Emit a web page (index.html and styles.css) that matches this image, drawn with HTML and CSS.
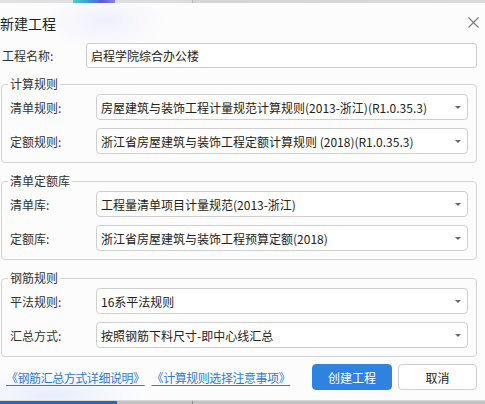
FILE: index.html
```html
<!DOCTYPE html>
<html lang="zh">
<head>
<meta charset="utf-8">
<title>新建工程</title>
<link rel="stylesheet" href="styles.css">
</head>
<body>
<div class="screen">
  <div class="topbar"><span class="blob"></span><span class="tick"></span></div>
  <div class="dialog">
    <div class="titlebar">
      <span class="title">新建工程</span>
      <svg class="close" width="11" height="11" viewBox="0 0 11 11"><path d="M0.5 0.5 L10.5 10.5 M10.5 0.5 L0.5 10.5" stroke="#7a7a7a" stroke-width="1.1" fill="none"/></svg>
    </div>
    <div class="name-row">
      <span class="name-label">工程名称:</span>
      <div class="input">启程学院综合办公楼</div>
    </div>

    <fieldset class="group">
      <legend>计算规则</legend>
      <div class="row"><span class="label">清单规则:</span><div class="select"><span>房屋建筑与装饰工程计量规范计算规则(2013-浙江)(R1.0.35.3)</span><i class="caret"></i></div></div>
      <div class="row"><span class="label">定额规则:</span><div class="select"><span>浙江省房屋建筑与装饰工程定额计算规则 (2018)(R1.0.35.3)</span><i class="caret"></i></div></div>
    </fieldset>

    <fieldset class="group">
      <legend>清单定额库</legend>
      <div class="row"><span class="label">清单库:</span><div class="select"><span>工程量清单项目计量规范(2013-浙江)</span><i class="caret"></i></div></div>
      <div class="row"><span class="label">定额库:</span><div class="select"><span>浙江省房屋建筑与装饰工程预算定额(2018)</span><i class="caret"></i></div></div>
    </fieldset>

    <fieldset class="group">
      <legend>钢筋规则</legend>
      <div class="row"><span class="label">平法规则:</span><div class="select"><span>16系平法规则</span><i class="caret"></i></div></div>
      <div class="row"><span class="label">汇总方式:</span><div class="select"><span>按照钢筋下料尺寸-即中心线汇总</span><i class="caret"></i></div></div>
    </fieldset>

    <div class="footer">
      <a class="link first" href="#">《钢筋汇总方式详细说明》</a>
      <a class="link" href="#">《计算规则选择注意事项》</a>
      <div class="buttons">
        <button class="btn primary">创建工程</button>
        <button class="btn">取消</button>
      </div>
    </div>
  </div>
  <div class="bottombar"><span class="progress"></span><span class="tick2"></span></div>
</div>
</body>
</html>
```

FILE: styles.css
```css
* { box-sizing: border-box; }
html, body { margin: 0; padding: 0; }
body {
  width: 485px;
  height: 404px;
  overflow: hidden;
  font-family: "Noto Sans CJK SC", "Noto Sans", sans-serif;
  font-size: 12px;
  color: #333;
  background: #fff;
}
.screen { width: 485px; height: 404px; display: flex; flex-direction: column; }

.topbar {
  height: 3px;
  background: linear-gradient(to right, #e2e2e2 0, #dcdcdc 192px, #d4d4d4 193px, #dadada 100%);
  display: flex;
  flex: none;
}
.blob {
  width: 42px;
  margin-left: 73px;
  background: linear-gradient(to right, #4fd1c0, #3aa0d8, #5a5ae0, #8a80e8);
}
.tick { width: 1px; margin-left: 77px; background: #b8b8b8; }

.dialog {
  flex: none;
  height: 397px;
  padding: 0 8px 0 1px;
  background:
    radial-gradient(ellipse 60px 28px at 105px 18px, rgba(225, 225, 255, 0.45), rgba(255,255,255,0) 100%),
    radial-gradient(ellipse 90px 25px at 50px 392px, rgba(220, 232, 252, 0.7), rgba(255,255,255,0) 100%),
    #fcfcfc;
}

.titlebar {
  height: 40px;
  display: flex;
  align-items: center;
  justify-content: space-between;
}
.title { font-size: 14px; color: #222; margin-left: -1px; }
.close { margin-right: -2px; margin-top: -1px; }

.name-row { display: flex; align-items: center; height: 25px; }
.name-label { width: 85px; padding-left: 1px; color: #333; }
.input {
  flex: 1;
  height: 25px;
  border: 1px solid #cdcdcd;
  border-radius: 3px;
  background: #fff;
  padding-left: 4px;
  line-height: 23px;
  color: #222;
}

.group {
  margin: 8px 0 0 0;
  padding: 2px 8px 8px 8px;
  border: 1px solid #d4d4d4;
  border-radius: 4px;
  display: flex;
  flex-direction: column;
  gap: 8px;
  min-width: 0;
}
.group + .group { margin-top: 10px; }
.group legend {
  padding: 0 2px;
  margin-left: -2px;
  line-height: 16px;
  color: #333;
}
.row { display: flex; align-items: center; height: 26px; }
.label { width: 86px; color: #333; }
.select {
  flex: 1;
  height: 26px;
  border: 1px solid #cfcfcf;
  border-radius: 4px;
  background: #fff;
  display: flex;
  align-items: center;
  justify-content: space-between;
  padding: 0 6px 0 4px;
  color: #222;
  white-space: nowrap;
}
.caret {
  width: 0; height: 0;
  border-left: 3px solid transparent;
  border-right: 3px solid transparent;
  border-top: 3px solid #666;
}

.footer {
  margin-top: 7px;
  height: 26px;
  display: flex;
  align-items: center;
}
.link {
  color: #2b7bd5;
  text-decoration: underline;
  text-underline-offset: 2px;
  letter-spacing: -0.45px;
}
.link.first { margin-left: 5px; }
.link + .link { margin-left: 7px; }
.buttons { margin-left: auto; display: flex; gap: 6px; }
.btn {
  font-family: inherit;
  font-size: 12px;
  height: 26px;
  width: 79px;
  border: 1px solid #cfcfcf;
  border-radius: 4px;
  background: #fff;
  color: #222;
  padding: 0;
}
.btn.primary {
  width: 80px;
  border-color: #2f82e0;
  background: #2f82e0;
  color: #fff;
}

.bottombar {
  flex: none;
  height: 4px;
  background: #c2c2c2;
  border-top: 1px solid #d8d8d8;
  display: flex;
}
.progress { width: 117px; background: #1f6cc6; }
.tick2 { width: 1px; margin-left: 75px; background: #8a8a8a; }
```
